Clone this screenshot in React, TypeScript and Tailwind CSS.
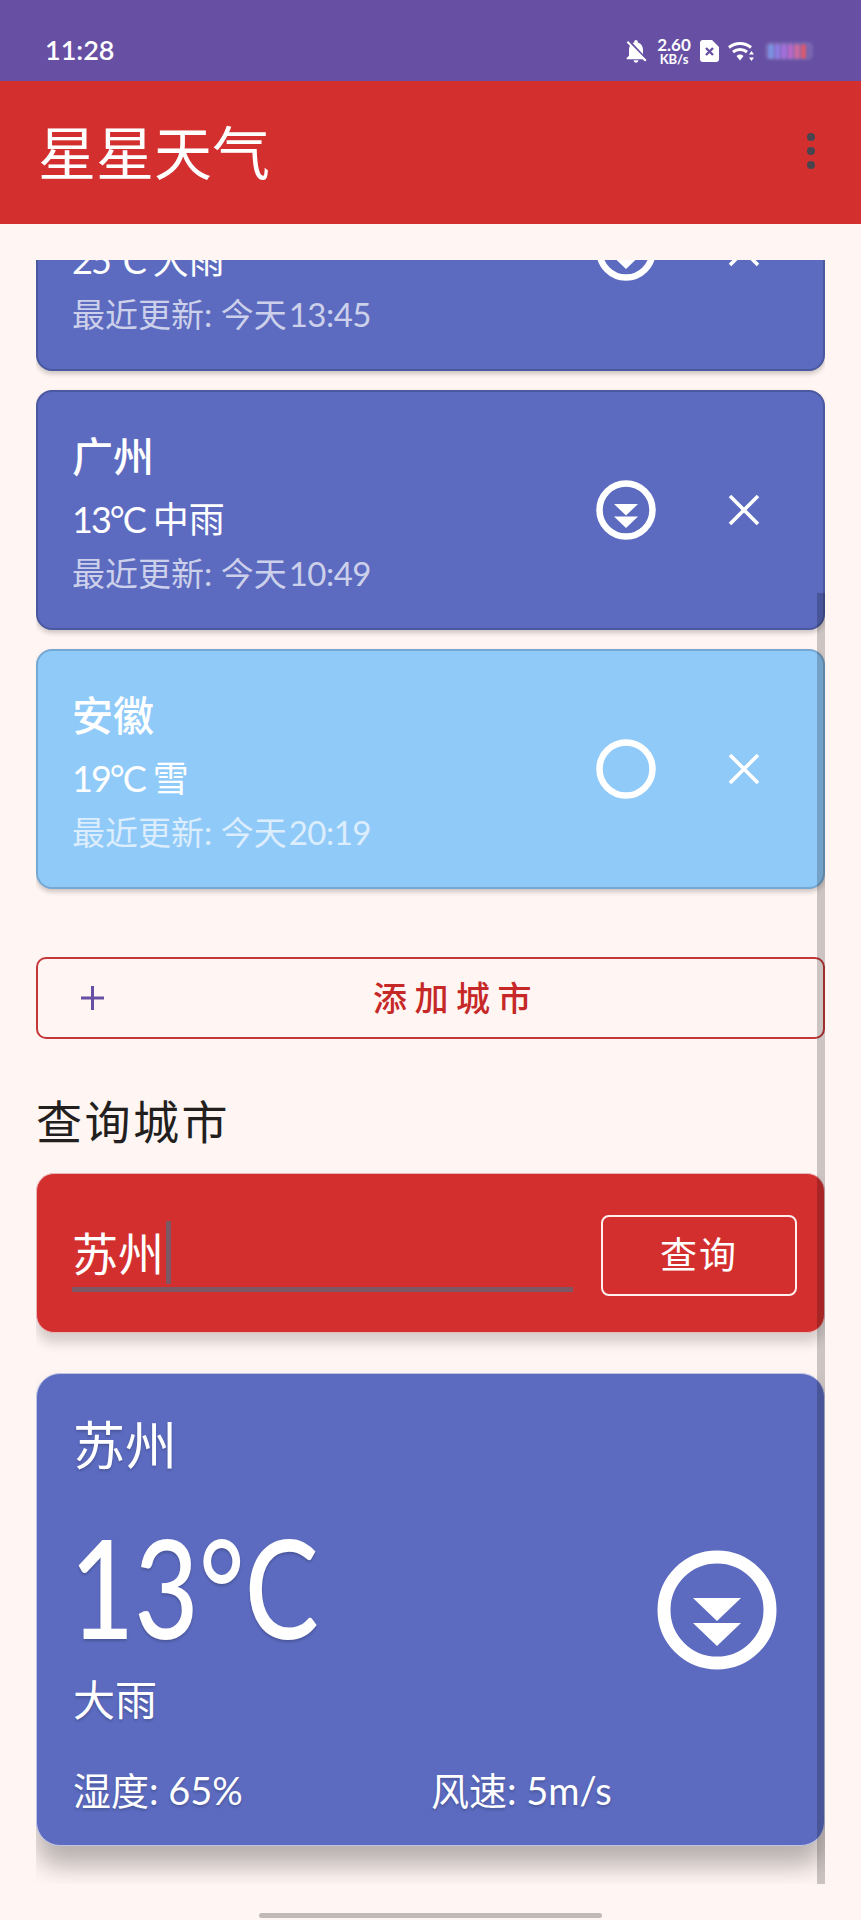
import { MdNotificationsOff } from "react-icons/md";

const ExpandIcon = ({ size, open }: { size: number; open: boolean }) => (
  <svg width={size} height={size} viewBox="0 0 120 120" className="shrink-0">
    <circle cx="60" cy="60" r="53" fill="none" stroke="#fff" strokeWidth="13" />
    {open && (
      <>
        <path d="M36 48h48L60 71z" fill="#fff" />
        <path d="M36 73h48L60 96z" fill="#fff" />
      </>
    )}
  </svg>
);

const CloseIcon = () => (
  <svg width="32" height="32" viewBox="0 0 32 32" className="shrink-0">
    <path d="M2 2l28 28M30 2L2 30" stroke="#fff" strokeWidth="3.6" fill="none" />
  </svg>
);

const WifiIcon = () => (
  <svg width="28" height="22" viewBox="0 0 28 22" className="ml-[8px]">
    <path d="M2 7.5a17 17 0 0 1 22 0M6 12a11 11 0 0 1 14 0" fill="none" stroke="#fff" strokeWidth="3" />
    <path d="M9.5 16a5.5 5.5 0 0 1 7 0L13 20.5z" fill="#fff" />
    <path d="M24.5 11l2.5 3.5h-5zM24.5 21l2.5-3.5h-5z" fill="#fff" />
  </svg>
);

const batteryBars = ["#7b8fe0", "#8e7be0", "#a070d8", "#b868c8", "#c86aa0", "#d85a70"];

const StatusBar = () => (
  <div className="h-[81px] bg-[#6750a4] flex items-center pt-[21px] pl-[45px] text-white shrink-0">
    <span className="text-[27px] leading-[30px] font-semibold -mt-[2px]">11:28</span>
    <div className="ml-auto flex items-center mr-[48px]">
      <MdNotificationsOff className="text-[28px]" />
      <div className="ml-[6px] w-[36px] flex flex-col items-center font-bold">
        <span className="text-[17px] leading-[16px]">2.60</span>
        <span className="text-[13px] leading-[13px]">KB/s</span>
      </div>
      <svg width="19" height="22" viewBox="0 0 19 22" className="ml-[8px]">
        <path d="M3 0h9l7 7v12a3 3 0 0 1-3 3H3a3 3 0 0 1-3-3V3a3 3 0 0 1 3-3z" fill="#fff" />
        <path d="M6 8l7 7M13 8l-7 7" stroke="#6750a4" strokeWidth="2.4" />
      </svg>
      <WifiIcon />
      <div className="ml-[10px] w-[48px] h-[18px] rounded-[5px] bg-[#ffffff1f] blur-[1px] flex items-center gap-[1px] pl-[3px]">
        {batteryBars.map((c) => (
          <div key={c} className="w-[5.5px] h-[15px] rounded-[3px]" style={{ background: c }} />
        ))}
      </div>
    </div>
  </div>
);

const AppBar = () => (
  <div className="h-[143px] bg-[#d32f2f] flex items-center justify-between pl-[38px] pr-[46px] shrink-0">
    <h1 className="text-[58px] leading-[70px] text-white">星星天气</h1>
    <div className="flex flex-col gap-[6px] -mt-[4px]">
      <div className="w-[8px] h-[8px] rounded-full bg-[#49454f]" />
      <div className="w-[8px] h-[8px] rounded-full bg-[#49454f]" />
      <div className="w-[8px] h-[8px] rounded-full bg-[#49454f]" />
    </div>
  </div>
);

const cities = [
  { name: "北京", temp: "25°C", desc: "大雨", time: "13:45", active: false },
  { name: "广州", temp: "13°C", desc: "中雨", time: "10:49", active: false },
  { name: "安徽", temp: "19°C", desc: "雪", time: "20:19", active: true },
];

const CityCard = ({ name, temp, desc, time, active }: (typeof cities)[number]) => (
  <div
    className={`h-[240px] rounded-[16px] border-2 flex items-center pl-[34px] pr-[63px] text-white shadow-[0_3px_5px_rgba(0,0,0,0.2)] ${
      active ? "bg-[#90caf9] border-[#76a8d4]" : "bg-[#5c6bc0] border-[#4a589f]"
    }`}>
    <div className="flex-1 pt-[3px]">
      <div className="text-[41px] leading-[60px] font-medium">{name}</div>
      <div className="text-[36px] leading-[54px] mt-[5px]">
        <span className="tracking-[-2px]">{temp}</span>
        <span className="ml-[8px]">{desc}</span>
      </div>
      <div className="text-[33px] leading-[46px] mt-[4px] text-white/70">
        <span>最近更新: 今天</span>
        <span className="ml-[2px] tracking-[-0.5px]">{time}</span>
      </div>
    </div>
    <ExpandIcon size={60} open={!active} />
    <div className="ml-[72px]">
      <CloseIcon />
    </div>
  </div>
);

const App = () => {
  return (
    <div className="w-[861px] h-[1920px] overflow-hidden bg-[#fff5f3] flex flex-col [font-family:'Lato','Noto_Sans_CJK_SC',sans-serif]">
      <StatusBar />
      <AppBar />

      <div className="relative mx-[36px] mt-[36px] h-[1624px] overflow-hidden shrink-0">
        <div className="-mt-[129px]">
          <div className="flex flex-col gap-[19px]">
            {cities.map((c) => (
              <CityCard key={c.name} {...c} />
            ))}
          </div>

          <div className="mt-[68px] h-[82px] rounded-[10px] border-2 border-[#c53838] flex items-center pl-[43px] pr-[15px]">
            <svg width="23" height="24" viewBox="0 0 23 24" className="shrink-0">
              <path d="M11.5 0v24M0 12h23" stroke="#6750a4" strokeWidth="3" />
            </svg>
            <span className="flex-1 text-center text-[34px] leading-[50px] tracking-[7.5px] font-medium text-[#c62828]">
              添加城市
            </span>
          </div>

          <h2 className="mt-[58px] text-[46px] leading-[50px] tracking-[2.5px] text-[#231f1e]">查询城市</h2>

          <div className="mt-[26px] h-[160px] rounded-[18px] bg-[#d32f2f] border border-[#e8b8b8] shadow-[0_10px_12px_rgba(0,0,0,0.16)] flex items-center pl-[35px] pr-[27px]">
            <div className="w-[501px] h-[73px] mt-[4px] border-b-[5px] border-[#7d5763] flex items-center">
              <span className="text-[46px] leading-[60px] text-white mt-[2px]">苏州</span>
              <span className="w-[5px] h-[63px] bg-[#7d5763] ml-[2px]" />
            </div>
            <button className="ml-auto mt-[4px] w-[196px] h-[81px] rounded-[8px] border-2 border-[#fff0ee] text-[37px] leading-[50px] tracking-[2px] text-white">
              查询
            </button>
          </div>

          <div className="mt-[40px] h-[473px] rounded-[24px] bg-[#5c6bc0] border border-[#bfc4e4] shadow-[0_20px_24px_rgba(0,0,0,0.28)] pl-[36px] pr-[47px] pt-[41px] text-white [text-shadow:0_2px_3px_rgba(0,0,0,0.2)]">
            <div className="text-[52px] leading-[60px]">苏州</div>
            <div className="flex justify-between items-start mt-[41px]">
              <div>
                <div className="text-[137px] leading-[140px] font-medium scale-x-[0.81] origin-left -ml-[3px]">13°C</div>
                <div className="text-[42px] leading-[60px] mt-[14px]">大雨</div>
              </div>
              <div className="mt-[34px]">
                <ExpandIcon size={120} open />
              </div>
            </div>
            <div className="grid grid-cols-2 mt-[33px] w-[716px] text-[38px] leading-[54px]">
              <span>湿度: 65%</span>
              <span>风速: 5m/s</span>
            </div>
          </div>
        </div>

        {/* overlay scrollbar */}
        <div className="absolute right-0 top-[333px] bottom-0 w-[8px] bg-black/20" />
      </div>

      <div className="mt-[29px] mx-auto w-[343px] h-[5px] rounded-full bg-[#c1b8b8] shrink-0" />
    </div>
  );
};

export default App;
